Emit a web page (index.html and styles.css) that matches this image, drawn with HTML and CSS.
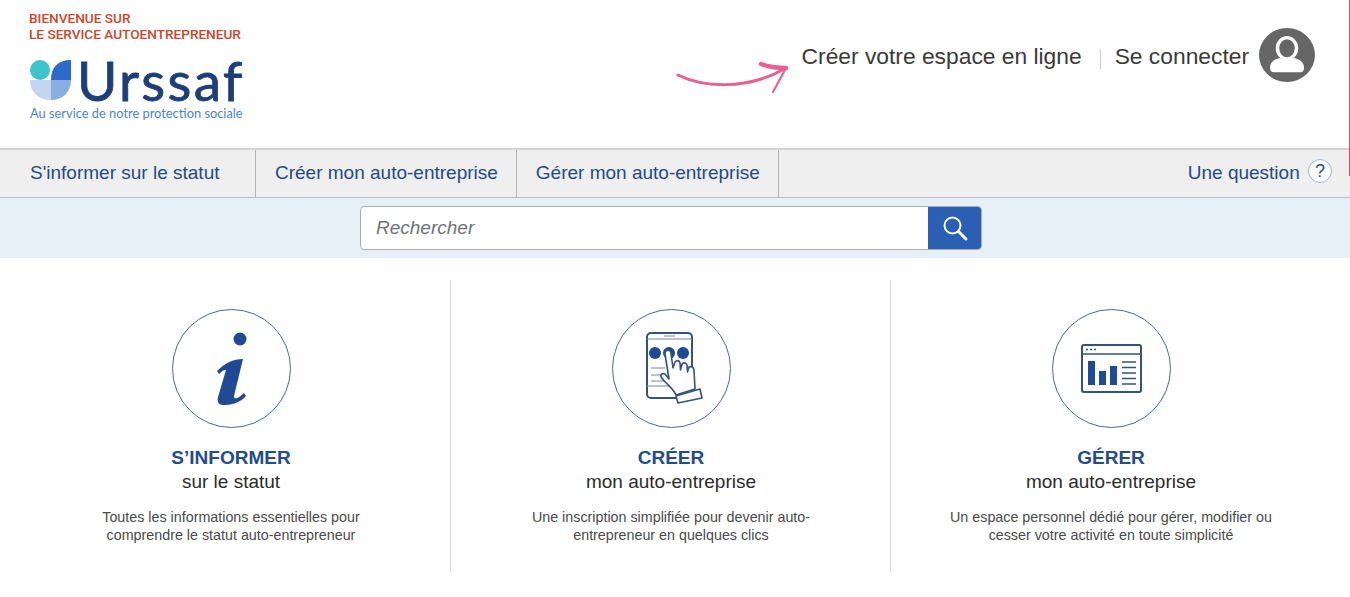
FILE: index.html
```html
<!DOCTYPE html>
<html lang="fr">
<head>
  <meta charset="UTF-8" />
  <title>Urssaf - Service autoentrepreneur</title>
  <link rel="stylesheet" href="styles.css">
</head>
<body>
  <header class="top">
    <div class="brand">
      <p class="welcome">BIENVENUE SUR<br>LE SERVICE AUTOENTREPRENEUR</p>
      <div class="logo">
        <svg class="logo-mark" width="41" height="40" viewBox="0 0 41 40">
          <circle cx="10" cy="10" r="10" fill="#3fc4cb"/>
          <path d="M21 20C21 8 27 0 41 0V20Z" fill="#2c6bcb"/>
          <path d="M0 20H21V40C8 40 0 32 0 20Z" fill="#c5d5f1"/>
          <path d="M21 20H41C41 32 33 40 21 40Z" fill="#8aaee2"/>
        </svg>
        <span class="logo-name">Urssaf</span>
      </div>
      <p class="tagline">Au service de notre protection sociale</p>
    </div>
    <div class="account">
      <svg class="arrow" width="116" height="36" viewBox="0 0 116 36">
        <path d="M3 15C25 26 70 32 111 8" fill="none" stroke="#e8608f" stroke-width="3" stroke-linecap="round"/>
        <path d="M86 4C94 7 102 8 111 8" fill="none" stroke="#e8608f" stroke-width="4.500" stroke-linecap="round"/>
        <path d="M111 8L98 32" fill="none" stroke="#e8608f" stroke-width="2.200" stroke-linecap="round"/>
      </svg>
      <a class="account-link">Créer votre espace en ligne</a>
      <span class="sep"></span>
      <a class="account-link">Se connecter</a>
      <svg class="avatar" width="56" height="54" viewBox="0 0 56 56" preserveAspectRatio="none">
        <circle cx="28" cy="28" r="28" fill="#666"/>
        <ellipse cx="28" cy="21" rx="9.500" ry="11" fill="none" stroke="#fff" stroke-width="3.500"/>
        <path d="M15 46C12 46 11 44 11 41C11 35 16 32 21 31C25 33.500 31 33.500 35 31C40 32 45 35 45 41C45 44 44 46 41 46Z" fill="#fff"/>
      </svg>
    </div>
  </header>

  <nav class="nav">
    <a class="nav-item first">S'informer sur le statut</a>
    <a class="nav-item">Créer mon auto-entreprise</a>
    <a class="nav-item">Gérer mon auto-entreprise</a>
    <a class="question">Une question <span class="help">?</span></a>
  </nav>

  <div class="search-bar">
    <div class="search">
      <span class="search-text">Rechercher</span>
      <span class="search-btn">
        <svg width="28" height="28" viewBox="0 0 28 28" fill="none" stroke="#fff">
          <circle cx="11.500" cy="11.500" r="8" stroke-width="2"/>
          <path d="M17.500 17.500L25 25" stroke-width="3" stroke-linecap="round"/>
        </svg>
      </span>
    </div>
  </div>

  <main class="cols">
    <section class="col">
      <div class="disc">
        <svg width="116" height="116" viewBox="0 0 116 116">
          <circle cx="67" cy="29" r="6.500" fill="#1f4b95"/>
          <path d="M44 61C52 53 60 49 70 49L61 86C61 90 65 89 71 83L73 86C66 94 57 95 50 95C45 95 44 91 45 87L53 60C50 60 48 62 46 64Z" fill="#1f4b95"/>
        </svg>
      </div>
      <h2>S’INFORMER</h2>
      <h3>sur le statut</h3>
      <p>Toutes les informations essentielles pour<br>comprendre le statut auto-entrepreneur</p>
    </section>
    <section class="col">
      <div class="disc">
        <svg width="116" height="116" viewBox="0 0 116 116">
          <rect x="34" y="23" width="45" height="65" rx="4" fill="#fff" stroke="#33527f" stroke-width="2"/>
          <path d="M34 29H79M34 76H62M51 26H62M38 58H52M38 65H52M38 71H52" stroke="#6f87a8" stroke-width="1.200" fill="none"/>
          <circle cx="42" cy="43" r="6" fill="#1f4b95"/>
          <circle cx="56" cy="43" r="6" fill="#1f4b95"/>
          <circle cx="70" cy="43" r="6" fill="#1f4b95"/>
          <path d="M52 44C52 39 58 39 58 44L60 58L62 52C64 50 66 50 67 53L67.500 60L69 54C71 52 73 53 74 55L74.500 62L76 57C78 56 81 57 81 60L82 79L63 85C60 78 52 73 48 67C47 64 50 63 52 64L56 69Z" fill="#fff" stroke="#33527f" stroke-width="1.600" stroke-linejoin="round"/>
          <path d="M63 86L87 79L89 88L65 93Z" fill="#fff" stroke="#33527f" stroke-width="1.600" stroke-linejoin="round"/>
        </svg>
      </div>
      <h2>CRÉER</h2>
      <h3>mon auto-entreprise</h3>
      <p>Une inscription simplifiée pour devenir auto-<br>entrepreneur en quelques clics</p>
    </section>
    <section class="col">
      <div class="disc">
        <svg width="116" height="116" viewBox="0 0 116 116">
          <rect x="29" y="35" width="59" height="47" rx="2" fill="#fff" stroke="#33527f" stroke-width="2"/>
          <path d="M29 44H88" stroke="#33527f" stroke-width="1.500"/>
          <path d="M33 39.500H35M37 39.500H39M41 39.500H43" stroke="#33527f" stroke-width="1.500"/>
          <rect x="35" y="51" width="7" height="24" fill="#1f4b95"/>
          <rect x="46" y="61" width="7" height="14" fill="#1f4b95"/>
          <rect x="57" y="56" width="7" height="19" fill="#1f4b95"/>
          <path d="M69 52H83M69 57.500H83M69 63H83M69 68.500H83M69 74H83" stroke="#33527f" stroke-width="1.500"/>
        </svg>
      </div>
      <h2>GÉRER</h2>
      <h3>mon auto-entreprise</h3>
      <p>Un espace personnel dédié pour gérer, modifier ou<br>cesser votre activité en toute simplicité</p>
    </section>
  </main>

  <div class="edge"></div>
</body>
</html>
```

FILE: styles.css
```css
html, body {
  height: 597px;
  overflow: hidden;
}
body {
  margin: 0;
  background: #fff;
  font-family: 'Liberation Sans', Arial, sans-serif;
  color: #333;
}
p, h2, h3 {
  margin: 0;
}
.top {
  height: 148px;
  display: flex;
  justify-content: space-between;
  box-sizing: border-box;
  padding: 10px 35px 0 29px;
}
.welcome {
  font-family: Roboto, sans-serif;
  font-size: 13.600px;
  line-height: 16px;
  font-weight: 500;
  color: #c9482c;
}
.logo {
  display: flex;
  align-items: center;
  gap: 6px;
  height: 44px;
  margin-top: 16px;
}
.logo-mark {
  margin-left: 1px;
}
.logo-name {
  font-family: Lato, sans-serif;
  font-size: 55px;
  line-height: 44px;
  letter-spacing: 2.400px;
  color: #1d3f78;
  -webkit-text-stroke: 0.8px #1d3f78;
}
.tagline {
  font-family: Lato, sans-serif;
  font-size: 12.850px;
  line-height: 14px;
  margin: 4px 0 0 1px;
  color: #4a86c8;
}
.account {
  display: flex;
  align-items: flex-start;
  padding-top: 18px;
  height: 56px;
}
.arrow {
  margin: 32px 11px 0 0;
}
.account-link {
  font-size: 22.800px;
  line-height: 57px;
  height: 56px;
  color: #3a3a3a;
}
.sep {
  width: 1px;
  height: 20px;
  margin: 21px 14px 0 18px;
  background: #c8c8c8;
}
.avatar {
  margin-left: 10px;
}
.nav {
  height: 50px;
  box-sizing: border-box;
  display: flex;
  align-items: stretch;
  background: #efefef;
  border-top: 2px solid #d3d3d3;
  border-bottom: 1px solid #b9bfc6;
}
.nav-item {
  font-size: 19px;
  line-height: 46px;
  color: #1f4a8a;
  padding: 0 18.500px;
  border-right: 1px solid #b5b5b5;
}
.nav-item.first {
  padding-left: 30px;
  padding-right: 36px;
}
.question {
  margin-left: auto;
  margin-right: 18px;
  font-size: 19px;
  line-height: 46px;
  color: #1f4a8a;
}
.help {
  display: inline-block;
  box-sizing: border-box;
  width: 24px;
  height: 24px;
  border: 1px solid #9db4d3;
  border-radius: 50%;
  background: #fff;
  font-size: 18px;
  line-height: 22px;
  text-align: center;
  vertical-align: 2px;
  margin-left: 3px;
}
.search-bar {
  height: 60px;
  background: #e8f0f7;
  display: flex;
  justify-content: center;
  padding-top: 8px;
  box-sizing: border-box;
  padding-right: 8px;
}
.search {
  width: 622px;
  height: 44px;
  box-sizing: border-box;
  display: flex;
  justify-content: space-between;
  background: #fff;
  border: 1px solid #a9adb1;
  border-radius: 4px;
  overflow: hidden;
}
.search-text {
  font-size: 19px;
  font-style: italic;
  line-height: 42px;
  padding-left: 15px;
  color: #6e7275;
}
.search-btn {
  width: 53px;
  background: #2b5fb4;
  display: flex;
  align-items: center;
  justify-content: center;
}
.cols {
  display: flex;
  margin: 22px 0 0 11px;
}
.col {
  width: 440px;
  height: 292px;
  box-sizing: border-box;
  padding: 29px 0 0 1px;
  text-align: center;
  border-right: 1px solid #d9d9d9;
}
.col:last-child {
  padding-left: 0;
  border-right: 0;
}
.disc {
  box-sizing: border-box;
  width: 119px;
  height: 119px;
  margin: 0 auto;
  border: 1.500px solid #4a6a96;
  border-radius: 50%;
}
.disc svg {
  display: block;
}
.col h2 {
  margin-top: 18px;
  font-size: 19px;
  line-height: 24px;
  font-weight: 700;
  color: #234c8d;
}
.col h3 {
  font-size: 19px;
  line-height: 24px;
  font-weight: 400;
  color: #2b2b2b;
}
.col p {
  margin-top: 14px;
  font-size: 14.300px;
  line-height: 18px;
  color: #4a4a4a;
}
.edge {
  position: absolute;
  top: 0;
  right: 0;
  width: 1px;
  height: 176px;
  background: #d9532f;
}
```
